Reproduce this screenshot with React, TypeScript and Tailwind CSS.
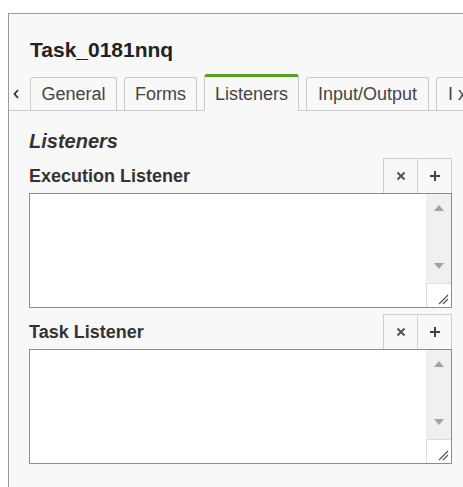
import React from "react";

const FONT = { fontFamily: '"Liberation Sans", Arial, sans-serif' };

function ScrollTextarea() {
  return (
    <div className="relative h-[115px] w-[423px] border border-[#8c8c8c] bg-white">
      <div className="absolute right-0 top-0 flex h-full w-[25px] flex-col">
        <div className="flex flex-1 flex-col items-center justify-between bg-[#f0f0f0] pb-[14px] pt-[11px]">
          <svg width="10" height="6" viewBox="0 0 10 6">
            <path d="M0 6 L5 0 L10 6 Z" fill="#a3a3a3" />
          </svg>
          <svg width="10" height="6" viewBox="0 0 10 6">
            <path d="M0 0 L5 6 L10 0 Z" fill="#a3a3a3" />
          </svg>
        </div>
        <div className="relative h-[24px] border-l border-t border-[#dcdcdc] bg-white">
          <svg className="absolute bottom-[2px] right-[2px]" width="11" height="11" viewBox="0 0 11 11">
            <path d="M1 10 L10 1 M5 10 L10 5" stroke="#555" strokeWidth="1.2" />
          </svg>
        </div>
      </div>
    </div>
  );
}

function ListenerGroup({ label }: { label: string }) {
  return (
    <div className="w-[423px]">
      <div className="flex h-[35px] items-end justify-between">
        <span className="mb-[6px] text-[18px] font-bold leading-[21px] text-[#333]">{label}</span>
        <div className="flex h-full">
          <button className="flex w-[34px] items-center justify-center border-l border-t border-[#cfcfcf] bg-[#f8f8f8]">
            <svg width="10" height="10" viewBox="0 0 10 10">
              <path d="M1.5 1.5 L8.5 8.5 M8.5 1.5 L1.5 8.5" stroke="#555" strokeWidth="2" />
            </svg>
          </button>
          <button className="flex w-[35px] items-center justify-center border-l border-r border-t border-[#cfcfcf] bg-[#f8f8f8]">
            <svg width="12" height="12" viewBox="0 0 12 12">
              <path d="M6 1 L6 11 M1 6 L11 6" stroke="#444" strokeWidth="2" />
            </svg>
          </button>
        </div>
      </div>
      <ScrollTextarea />
    </div>
  );
}

function Tab({ label, width, active }: { label: string; width: string; active?: boolean }) {
  if (active) {
    return (
      <div
        className={`${width} mb-[-1px] flex h-[37px] shrink-0 items-center justify-center rounded-t-[3px] border-l border-r border-t-[3px] border-[#cccccc] border-t-[#52a31c] bg-[#f8f8f8] pt-[1px] text-[18px] text-[#444]`}
      >
        {label}
      </div>
    );
  }
  return (
    <div
      className={`${width} flex h-[33px] shrink-0 items-center justify-center rounded-t-[3px] border-l border-r border-t border-[#cccccc] bg-[#f8f8f8] text-[18px] text-[#444]`}
    >
      {label}
    </div>
  );
}

export default function App() {
  return (
    <div className="h-[487px] w-[463px] overflow-hidden bg-white pl-[8px] pt-[13px]" style={FONT}>
      <div className="h-[474px] w-[470px] overflow-hidden border-l border-t border-[#9a9a9a] bg-[#f8f8f8]">
        <div className="pl-[21px] pt-[24px] text-[21px] font-bold leading-[24px] text-[#222]">Task_0181nnq</div>

        <div className="mt-[12px] flex h-[37px] items-end gap-[7px] border-b border-[#cccccc]">
          <div className="flex h-[33px] w-[14px] shrink-0 items-center justify-start pl-[4px]">
            <svg width="6" height="10" viewBox="0 0 6 10">
              <path d="M5 1 L1.5 5 L5 9" stroke="#333" strokeWidth="1.8" fill="none" />
            </svg>
          </div>
          <Tab label="General" width="w-[87px]" />
          <Tab label="Forms" width="w-[73px]" />
          <Tab label="Listeners" width="w-[95px]" active />
          <Tab label="Input/Output" width="w-[123px]" />
          <div className="flex h-[33px] w-[60px] shrink-0 items-center rounded-t-[3px] border-l border-r border-t border-[#cccccc] bg-[#f8f8f8] pl-[11px] text-[18px] text-[#444]">
            I x
          </div>
        </div>

        <div className="pl-[20px]">
          <div className="pt-[18px] text-[20px] font-bold italic leading-[24px] text-[#333]">Listeners</div>
          <div className="mt-[5px]">
            <ListenerGroup label="Execution Listener" />
          </div>
          <div className="mt-[6px]">
            <ListenerGroup label="Task Listener" />
          </div>
        </div>
      </div>
    </div>
  );
}
